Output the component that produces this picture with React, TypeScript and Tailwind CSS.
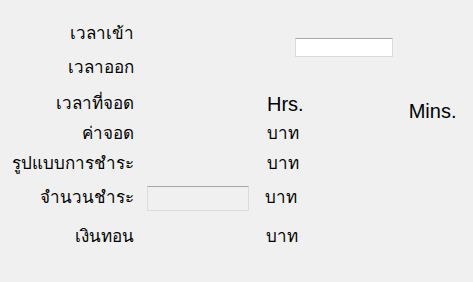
const font = { fontFamily: '"Liberation Sans", "Noto Sans", sans-serif' }

function Label({ children }: { children: React.ReactNode }) {
  return (
    <div className="w-[134px] shrink-0 text-right text-[17px] leading-[24px] text-black whitespace-nowrap">
      {children}
    </div>
  )
}

function Unit({ children, className = '' }: { children: React.ReactNode; className?: string }) {
  return (
    <div className={`leading-[24px] text-black whitespace-nowrap ${className}`}>
      {children}
    </div>
  )
}

export default function App() {
  return (
    <div className="w-[473px] h-[282px] bg-[#f0f0f0] pt-[22px] overflow-hidden" style={font}>
      <div className="flex h-[34px] items-start">
        <Label>เวลาเข้า</Label>
        <input
          className="ml-[161px] mt-[16px] w-[98px] h-[19px] bg-white border border-[#d9d9d9] border-t-[#a6a6a6] outline-none"
          readOnly
        />
      </div>
      <div className="flex h-[36px] items-start">
        <Label>เวลาออก</Label>
      </div>
      <div className="flex h-[30px] items-start">
        <Label>เวลาที่จอด</Label>
        <Unit className="ml-[133px] text-[20px]">Hrs.</Unit>
        <Unit className="ml-[105px] mt-[7px] text-[20px]">Mins.</Unit>
      </div>
      <div className="flex h-[30px] items-start">
        <Label>ค่าจอด</Label>
        <Unit className="ml-[133px] text-[17px]">บาท</Unit>
      </div>
      <div className="flex h-[34px] items-start">
        <Label>รูปแบบการชำระ</Label>
        <Unit className="ml-[133px] text-[17px]">บาท</Unit>
      </div>
      <div className="flex h-[39px] items-start">
        <Label>จำนวนชำระ</Label>
        <input
          className="ml-[13px] w-[102px] h-[25px] bg-[#f0f0f0] border border-[#dcdcdc] border-t-[#a6a6a6] outline-none"
          readOnly
        />
        <Unit className="ml-[16px] text-[17px]">บาท</Unit>
      </div>
      <div className="flex h-[30px] items-start">
        <Label>เงินทอน</Label>
        <Unit className="ml-[132px] text-[17px]">บาท</Unit>
      </div>
    </div>
  )
}
